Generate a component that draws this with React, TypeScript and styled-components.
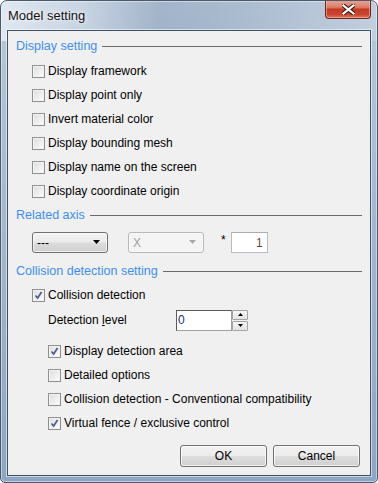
import React from "react";
import styled, { createGlobalStyle } from "styled-components";

const GlobalStyle = createGlobalStyle`
  html, body {
    margin: 0;
    padding: 0;
    background: #ffffff;
  }
  body {
    font-family: "Liberation Sans", Arial, sans-serif;
    font-size: 12px;
    color: #000;
  }
`;

const displayOptions = [
  "Display framework",
  "Display point only",
  "Invert material color",
  "Display bounding mesh",
  "Display name on the screen",
  "Display coordinate origin",
];

const detectionOptions = [
  { label: "Display detection area", checked: true },
  { label: "Detailed options", checked: false },
  { label: "Collision detection - Conventional compatibility", checked: false },
  { label: "Virtual fence / exclusive control", checked: true },
];

const CheckBox = ({ checked, label }: { checked?: boolean; label: string }) => (
  <CheckRow>
    <Box>
      {checked && (
        <svg width="9" height="9" viewBox="0 0 9 9">
          <path d="M1.5 4.5 L3.6 7 L7.6 1" fill="none" stroke="#4a5e93" strokeWidth="1.7" />
        </svg>
      )}
    </Box>
    <span>{label}</span>
  </CheckRow>
);

const Arrow = ({ color }: { color: string }) => (
  <svg width="8" height="5" viewBox="0 0 8 5">
    <path d="M0 0 H7 L3.5 4 Z" fill={color} />
  </svg>
);

const App = () => {
  return (
    <>
      <GlobalStyle />
      <Window>
        <TitleBar>
          <Title>Model setting</Title>
          <CloseButton>
            <svg width="13" height="11" viewBox="0 0 13 11">
              <path
                d="M1 1 L12 10 M12 1 L1 10"
                stroke="#3b1a16"
                strokeWidth="4.2"
                strokeLinecap="square"
              />
              <path
                d="M1.5 1.5 L11.5 9.5 M11.5 1.5 L1.5 9.5"
                stroke="#ffffff"
                strokeWidth="2.2"
                strokeLinecap="square"
              />
            </svg>
          </CloseButton>
        </TitleBar>
        <Client>
          <Legend>Display setting</Legend>
          <Group $gap={5} $indent={16}>
            {displayOptions.map((o) => (
              <CheckBox key={o} label={o} />
            ))}
          </Group>

          <Legend $top={4}>Related axis</Legend>
          <ComboRow>
            <Combo>
              <span>---</span>
              <Arrow color="#000" />
            </Combo>
            <Combo $disabled>
              <span>X</span>
              <Arrow color="#a8a8a8" />
            </Combo>
            <Star>*</Star>
            <NumberBox>1</NumberBox>
          </ComboRow>

          <Legend $top={10}>Collision detection setting</Legend>
          <Group $gap={4} $indent={16}>
            <CheckBox checked label="Collision detection" />
            <LevelRow>
              <LevelLabel>
                Detection <u>l</u>evel
              </LevelLabel>
              <Spin>
                <SpinField>0</SpinField>
                <SpinButtons>
                  <SpinButton>
                    <svg width="5" height="3" viewBox="0 0 5 3">
                      <path d="M2.5 0 L5 3 H0 Z" fill="#000" />
                    </svg>
                  </SpinButton>
                  <SpinButton>
                    <svg width="5" height="3" viewBox="0 0 5 3">
                      <path d="M0 0 H5 L2.5 3 Z" fill="#000" />
                    </svg>
                  </SpinButton>
                </SpinButtons>
              </Spin>
            </LevelRow>
          </Group>
          <Group $gap={7} $indent={32}>
            {detectionOptions.map((o) => (
              <CheckBox key={o.label} label={o.label} checked={o.checked} />
            ))}
          </Group>

          <Buttons>
            <Button>OK</Button>
            <Button>Cancel</Button>
          </Buttons>
        </Client>
      </Window>
    </>
  );
};

export default App;

const Window = styled.div`
  width: 378px;
  height: 483px;
  box-sizing: border-box;
  display: flex;
  flex-direction: column;
  padding: 0 6px 6px 6px;
  border: 1px solid #4a5a6d;
  border-radius: 7px 7px 5px 5px;
  background:
    linear-gradient(
      90deg,
      rgba(226, 234, 242, 0.95) 0%,
      rgba(205, 217, 230, 0.7) 22%,
      rgba(125, 146, 172, 0.35) 42%,
      rgba(130, 152, 178, 0.3) 58%,
      rgba(185, 200, 216, 0.5) 85%,
      rgba(200, 212, 225, 0.6) 100%
    ) top / 100% 40px no-repeat,
    linear-gradient(180deg, #b8c8da 0%, #a7b9ce 40%, #8ea6c2 100%);
  box-shadow: inset 0 0 0 1px rgba(255, 255, 255, 0.45);
  overflow: hidden;
`;

const TitleBar = styled.div`
  height: 29px;
  display: flex;
  align-items: flex-start;
  justify-content: space-between;
`;

const Title = styled.div`
  margin-top: 7px;
  margin-left: 1px;
  font-family: "Liberation Sans", Arial, sans-serif;
  font-size: 13px;
  color: #111;
  text-shadow: 0 0 6px rgba(255, 255, 255, 0.9), 0 0 3px rgba(255, 255, 255, 0.9);
`;

const CloseButton = styled.div`
  width: 46px;
  height: 19px;
  margin-top: -1px;
  box-sizing: border-box;
  display: flex;
  align-items: center;
  justify-content: center;
  border: 1px solid #6a2a22;
  border-top: none;
  border-radius: 0 0 4px 4px;
  background: linear-gradient(
    180deg,
    #eba594 0%,
    #dc7e69 40%,
    #c43a22 52%,
    #c8452d 80%,
    #e0775b 100%
  );
  box-shadow: inset 0 0 0 1px rgba(255, 200, 190, 0.5);
`;

const Client = styled.div`
  flex: 1;
  display: flex;
  flex-direction: column;
  padding: 7px 8px 0 8px;
  background: #f0f0f0;
  border: 1px solid #3f5165;
  box-shadow: 0 0 0 1px rgba(255, 255, 255, 0.55);
`;

const Legend = styled.div<{ $top?: number }>`
  height: 16px;
  margin-top: ${(p) => p.$top ?? 0}px;
  display: flex;
  align-items: center;
  gap: 5px;
  color: #3c8ff0;
  font-size: 12.5px;
  &::after {
    content: "";
    flex: 1;
    height: 1px;
    margin-top: 1px;
    background: #6b6b6b;
  }
`;

const Group = styled.div<{ $gap: number; $indent: number }>`
  margin-top: ${(p) => p.$gap}px;
  padding-left: ${(p) => p.$indent}px;
  display: flex;
  flex-direction: column;
`;

const CheckRow = styled.div`
  height: 24px;
  display: flex;
  align-items: center;
  gap: 3px;
`;

const Box = styled.div`
  width: 13px;
  height: 13px;
  box-sizing: border-box;
  border: 1px solid #8e8f8f;
  background: linear-gradient(135deg, #dcdcdc 0%, #f3f3f3 70%, #fafafa 100%);
  box-shadow: inset 0 0 0 1px #f4f4f4;
  display: flex;
  align-items: center;
  justify-content: center;
`;

const ComboRow = styled.div`
  margin-top: 9px;
  padding-left: 16px;
  height: 21px;
  display: flex;
  align-items: center;
`;

const Combo = styled.div<{ $disabled?: boolean }>`
  width: 76px;
  height: 21px;
  box-sizing: border-box;
  margin-right: 20px;
  padding: 0 6px 0 4px;
  display: flex;
  align-items: center;
  justify-content: space-between;
  border: 1px solid ${(p) => (p.$disabled ? "#b5b9bc" : "#707070")};
  border-radius: 3px;
  color: ${(p) => (p.$disabled ? "#a0a0a0" : "#000")};
  background: ${(p) =>
    p.$disabled
      ? "#f4f4f4"
      : "linear-gradient(180deg, #f2f2f2 0%, #ebebeb 48%, #dddddd 52%, #cfcfcf 100%)"};
  box-shadow: inset 0 0 0 1px ${(p) => (p.$disabled ? "#f9f9f9" : "rgba(255,255,255,0.7)")};
`;

const Star = styled.span`
  margin-left: -3px;
  margin-right: 5px;
  align-self: flex-start;
  margin-top: 1px;
  font-size: 12px;
`;

const NumberBox = styled.div`
  width: 37px;
  height: 21px;
  box-sizing: border-box;
  border: 1px solid #b8bcc2;
  border-top-color: #abadb3;
  background: #fff;
  display: flex;
  align-items: center;
  justify-content: flex-end;
  padding-right: 4px;
  color: #5b4a3f;
`;

const LevelRow = styled.div`
  margin-top: 1px;
  padding-left: 16px;
  height: 24px;
  display: flex;
  align-items: center;
`;

const LevelLabel = styled.span`
  width: 128px;
`;

const Spin = styled.div`
  display: flex;
  height: 21px;
`;

const SpinField = styled.div`
  width: 56px;
  box-sizing: border-box;
  border: 1px solid #5a5a5a;
  border-right-color: #a0a0a0;
  border-bottom-color: #a0a0a0;
  background: #fff;
  display: flex;
  align-items: center;
  padding-left: 1px;
  color: #1f1f8f;
`;

const SpinButtons = styled.div`
  display: flex;
  flex-direction: column;
  gap: 1px;
`;

const SpinButton = styled.div`
  width: 16px;
  height: 10px;
  box-sizing: border-box;
  border: 1px solid #a3a3a3;
  border-radius: 1px;
  background: linear-gradient(180deg, #f6f6f6 0%, #e4e4e4 100%);
  display: flex;
  align-items: center;
  justify-content: center;
`;

const Buttons = styled.div`
  margin-top: 10px;
  padding-right: 2px;
  display: flex;
  justify-content: flex-end;
  gap: 6px;
`;

const Button = styled.div`
  width: 87px;
  height: 22px;
  box-sizing: border-box;
  border: 1px solid #707070;
  border-radius: 3px;
  background: linear-gradient(180deg, #f2f2f2 0%, #ebebeb 48%, #dddddd 52%, #cfcfcf 100%);
  box-shadow: inset 0 0 0 1px rgba(255, 255, 255, 0.75);
  display: flex;
  align-items: center;
  justify-content: center;
  font-size: 12px;
`;
